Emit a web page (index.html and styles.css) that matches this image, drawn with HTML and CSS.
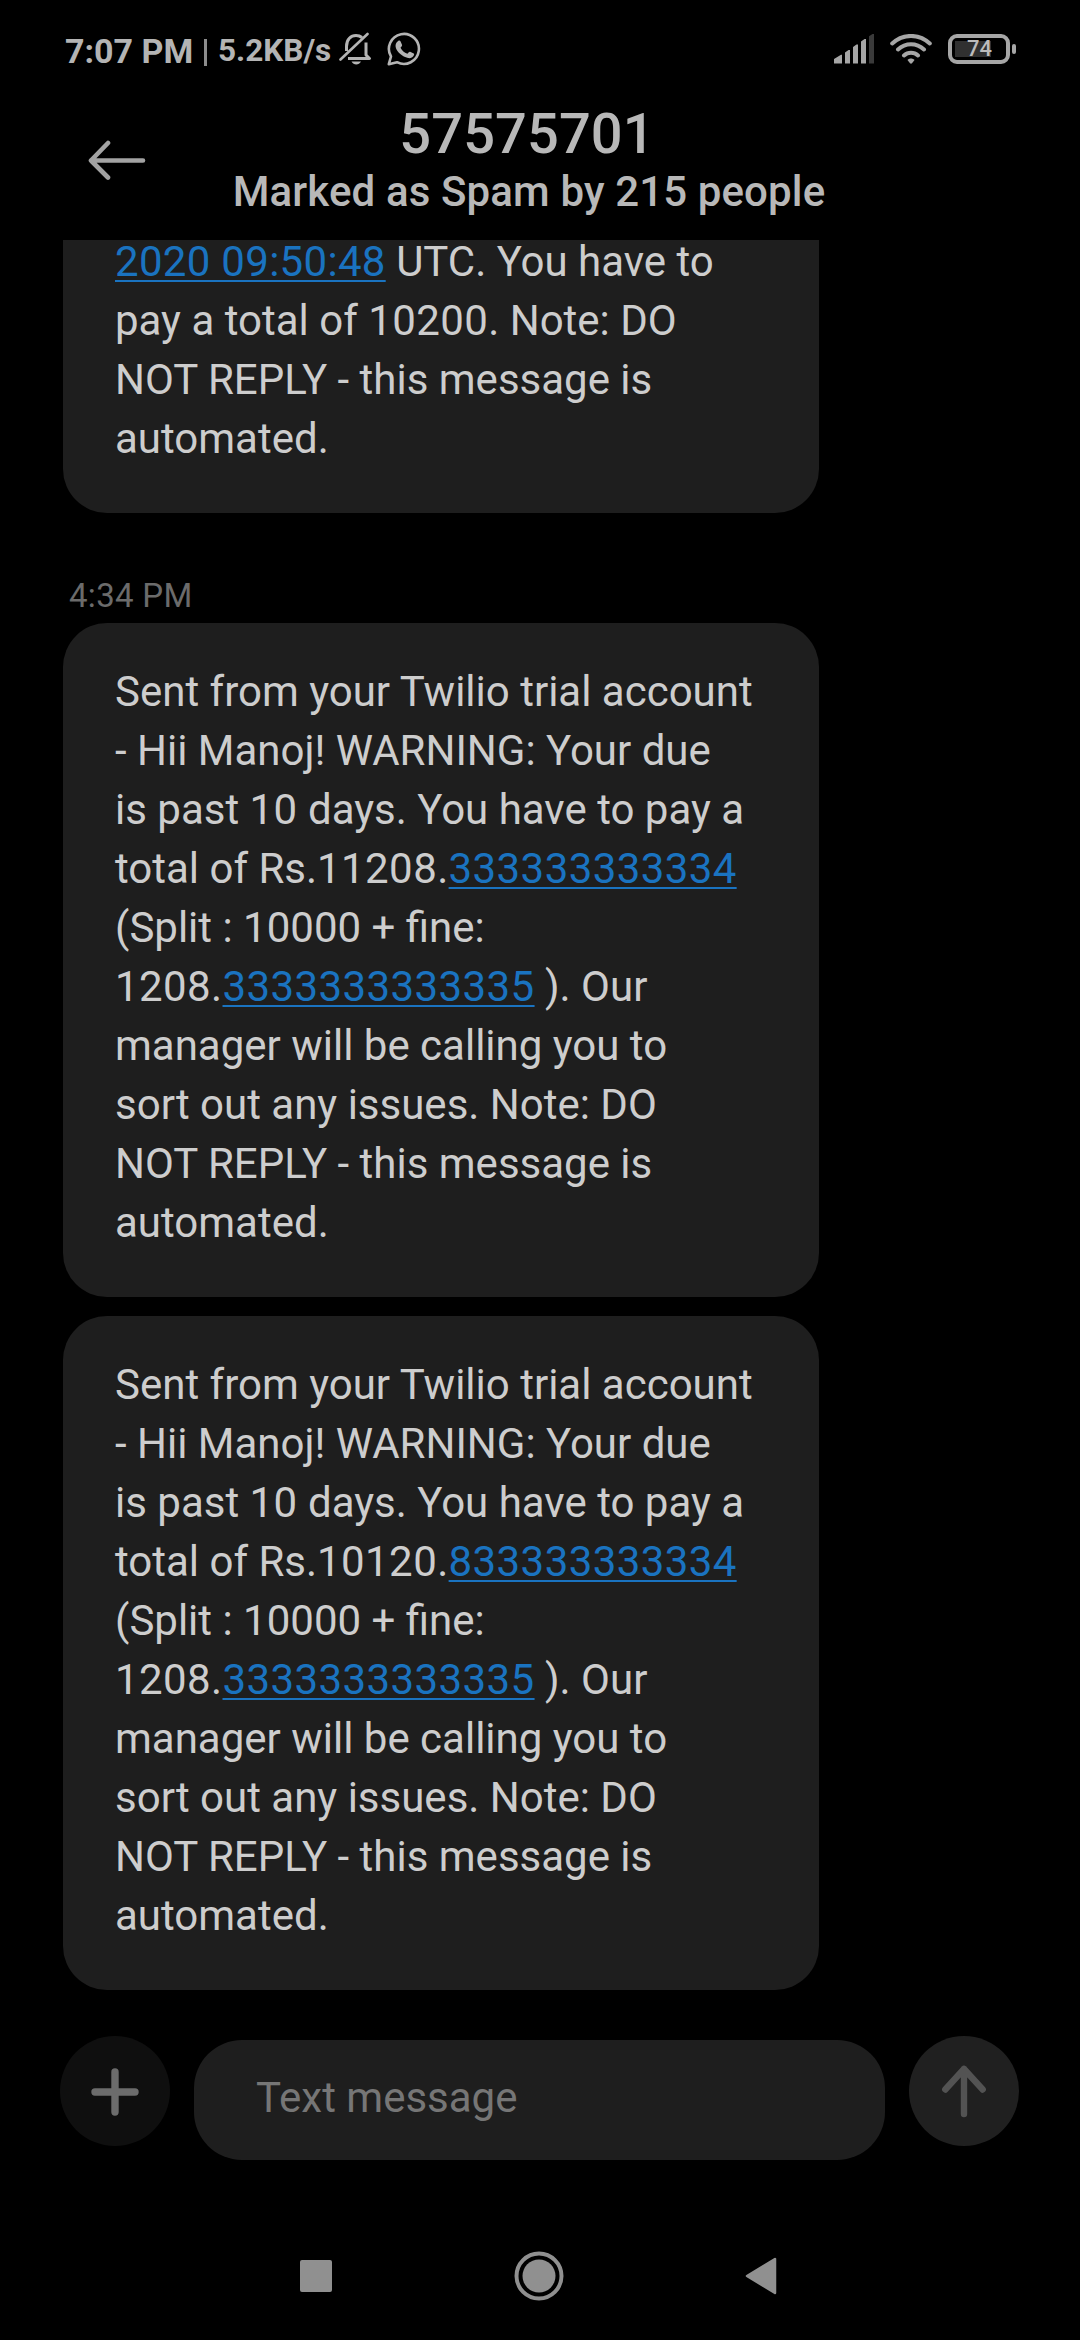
FILE: index.html
```html
<!DOCTYPE html>
<html lang="en">
<head>
<meta charset="utf-8">
<title>57575701</title>
<link rel="stylesheet" href="styles.css">
</head>
<body>
<div class="screen">
  <div class="status">
    <span class="clock">7:07 PM</span>
    <span class="divider"></span>
    <span class="speed">5.2KB/s</span>
    <svg class="bell" width="34" height="34" viewBox="0 0 34 34" fill="none" stroke="#b4b4b4" stroke-width="3">
      <path d="M7.500 19V14.500C7.500 7 12 3.500 17 3.500c2.500 0 4.500.8 6 2"/>
      <path d="M27 10.500V23l3.500 3.500H9" stroke-linejoin="round"/>
      <path d="M1.500 27.500 28.500 2" stroke-linecap="round" stroke-width="2.600"/>
      <path d="M12.500 29.500h9.500c-2 4-7.500 4-9.500 0z" fill="#b4b4b4" stroke="none"/>
    </svg>
    <svg class="whatsapp" width="34" height="34" viewBox="0 0 34 34" fill="none">
      <path d="M1.800 32.200 4 24.500A15 15 0 1 1 10 30.200z" stroke="#b4b4b4" stroke-width="2.600" stroke-linejoin="round"/>
      <path d="M11.400 8.700c.9-.4 1.700-.3 2.200.7l1.400 3.300c.3.800-.1 1.400-1.500 3 1.600 2.900 3.700 4.800 6.900 6.100 1.300-1.500 1.800-2.400 2.700-2.100l3.600 1.800c.6.400.6 1-.1 2.300-1 1.900-3.600 2.700-5.500 2.200-6.100-1.300-10.500-5.500-12.200-9.900-.9-2.600-.2-5.900 2.500-7.400z" fill="#b4b4b4"/>
    </svg>
    <span class="spacer"></span>
    <svg class="signal" width="40" height="30" viewBox="0 0 40 30" fill="#a6a6a6">
      <path d="M0 29.500v-4.500l7-4.200h1v8.700zM11 29.500V18.600l3.500-2.600H16v13.500zM19 29.500V13l3.500-2.500H24v19zM27 29.500V7.500L30.500 5H32v24.500z"/>
      <path d="M35 29.500V2.300L38.500 0H40v29.500z" fill="#3a3a3a"/>
    </svg>
    <svg class="wifi" width="42" height="30" viewBox="0 0 42 30" fill="none" stroke="#a6a6a6" stroke-width="4" stroke-linecap="round">
      <path d="M2.200 9.500C13-.6 29-.6 39.800 9.500M8 15.500c7.500-7 18.500-7 26 0M14 21.500c4-3.700 10-3.700 14 0"/>
      <path d="M17.500 26c1.800-2 5.200-2 7 0L22 29.300q-1 .8-2 0z" fill="#a6a6a6" stroke="none"/>
    </svg>
    <span class="battery"><span class="battery-text">74</span></span>
    <span class="battery-nub"></span>
  </div>

  <header class="header">
    <svg class="back" width="58" height="40" viewBox="0 0 58 40" fill="none" stroke="#a3a3a3" stroke-width="4.600" stroke-linecap="round" stroke-linejoin="round">
      <path d="M55 20.500H3M20 3 3 20.500 20 37.500"/>
    </svg>
    <div class="titles">
      <div class="title">57575701</div>
      <div class="subtitle">Marked as Spam by 215 people</div>
    </div>
  </header>

  <main class="chat">
    <div class="bubble clipped"><a class="date">2020 09:50:48</a> UTC. You have to<br>pay a total of <span class="num">10200</span>. Note: DO<br>NOT REPLY - this message is<br>automated.</div>
    <div class="time">4:34 PM</div>
    <div class="bubble">Sent from your Twilio trial account<br>- Hii Manoj! WARNING: Your due<br>is past <span class="num">10</span> days. You have to pay a<br>total of Rs.<span class="num">11208.</span><a>333333333334</a><br>(Split : 10000 + fine:<br><span class="num">1208.</span><a>3333333333335</a> ). Our<br>manager will be calling you to<br>sort out any issues. Note: DO<br>NOT REPLY - this message is<br>automated.</div>
    <div class="bubble">Sent from your Twilio trial account<br>- Hii Manoj! WARNING: Your due<br>is past <span class="num">10</span> days. You have to pay a<br>total of Rs.<span class="num">10120.</span><a>833333333334</a><br>(Split : 10000 + fine:<br><span class="num">1208.</span><a>3333333333335</a> ). Our<br>manager will be calling you to<br>sort out any issues. Note: DO<br>NOT REPLY - this message is<br>automated.</div>
  </main>

  <footer class="composer">
    <div class="round add">
      <svg width="50" height="50" viewBox="0 0 50 50" stroke="#6c6c6c" stroke-width="7.400" stroke-linecap="round"><path d="M25 6v40M5 26h40"/></svg>
    </div>
    <div class="field">Text message</div>
    <div class="round send">
      <svg width="50" height="56" viewBox="0 0 50 56" fill="none" stroke="#535353" stroke-width="6.400" stroke-linecap="round" stroke-linejoin="round"><path d="M25 51V6M6.300 26.500 25 6l18.700 20.500"/></svg>
    </div>
  </footer>

  <nav class="nav">
    <svg width="32" height="32" viewBox="0 0 32 32"><rect width="32" height="32" rx="2" fill="#909090"/></svg>
    <svg width="50" height="50" viewBox="0 0 50 50"><circle cx="25" cy="25" r="22.500" fill="none" stroke="#909090" stroke-width="4"/><circle cx="25" cy="25" r="16.500" fill="#909090"/></svg>
    <svg width="32" height="38" viewBox="0 0 32 38"><path d="M2 19 30 2v34z" fill="#909090" stroke="#909090" stroke-width="2.500" stroke-linejoin="round"/></svg>
  </nav>
</div>
</body>
</html>
```

FILE: styles.css
```css
* {
  box-sizing: border-box;
}

body {
  margin: 0;
  background: #000;
  font-family: Roboto, "Noto Sans", sans-serif;
}

svg {
  display: block;
  flex: none;
}

.screen {
  display: flex;
  flex-direction: column;
  width: 1080px;
  height: 2340px;
  overflow: hidden;
  background: #000;
}

.screen > * {
  flex-shrink: 0;
}

.status {
  display: flex;
  align-items: center;
  height: 100px;
  padding: 0 64px 2px 65px;
  color: #b4b4b4;
  font-weight: 700;
  white-space: nowrap;
}

.clock {
  width: 139px;
  margin-top: 3px;
  font-size: 34px;
  line-height: 40px;
}

.divider {
  width: 3px;
  height: 27px;
  margin: 6px 11px 0 0;
  background: #8c8c8c;
}

.speed {
  width: 121px;
  margin-top: 4px;
  font-size: 31.5px;
  line-height: 38px;
}

.whatsapp {
  margin-left: 14px;
}

.spacer {
  flex: 1;
}

.wifi {
  margin-left: 16px;
}

.battery {
  display: flex;
  align-items: center;
  justify-content: center;
  width: 62px;
  height: 30px;
  margin-left: 16px;
  padding-left: 1px;
  border: 4px solid #a6a6a6;
  border-radius: 9px;
  background: linear-gradient(#303030, #303030) 3px 3px / 36px 16px no-repeat;
}

.battery-text {
  color: #bcbcbc;
  font-size: 22px;
  font-weight: 500;
  line-height: 22px;
}

.battery-nub {
  width: 4px;
  height: 10px;
  margin-left: 2px;
  border-radius: 2px;
  background: #a6a6a6;
}

.header {
  display: flex;
  height: 140px;
  padding: 1px 0 0 88px;
}

.back {
  margin-top: 39px;
}

.titles {
  display: flex;
  flex-direction: column;
  width: 766px;
  color: #b8b8b8;
  font-weight: 500;
  text-align: center;
}

.title {
  padding-right: 4px;
  font-size: 56px;
  letter-spacing: 0.1px;
  line-height: 66px;
}

.subtitle {
  font-size: 42px;
  letter-spacing: 0.13px;
  line-height: 50px;
}

.chat {
  display: flex;
  flex-direction: column;
  height: 1750px;
  padding-left: 63px;
  overflow: hidden;
}

.bubble {
  flex: none;
  width: 756px;
  height: 674px;
  margin-bottom: 19px;
  padding: 39px 0 0 52px;
  border-radius: 44px;
  background: #1e1e1e;
  color: #cdcdcd;
  font-size: 42px;
  line-height: 59px;
  white-space: nowrap;
}

/* The oldest message is scrolled partly under the header. */
.bubble.clipped {
  height: 281px;
  margin-top: -8px;
  margin-bottom: 0;
  padding-top: 0;
  border-radius: 0 0 44px 44px;
}

.bubble a {
  color: #1a73c0;
  letter-spacing: 0.4px;
  text-decoration: underline;
  text-decoration-thickness: 2px;
  text-underline-offset: 4px;
}

.bubble a.date {
  letter-spacing: 0.3px;
}

.num {
  letter-spacing: 0.4px;
}

.time {
  flex: none;
  height: 110px;
  padding: 63px 0 0 6px;
  color: #6b6b6b;
  font-size: 33px;
  letter-spacing: 0.3px;
  line-height: 40px;
}

.composer {
  display: flex;
  height: 210px;
  padding: 46px 60px 0;
}

.round {
  display: flex;
  align-items: center;
  justify-content: center;
  width: 110px;
  height: 110px;
  border-radius: 50%;
}

.add {
  background: #0f0f0f;
}

.send {
  background: #202020;
}

.field {
  width: 691px;
  height: 120px;
  margin: 4px 24px 0;
  padding-left: 62px;
  border-radius: 48px;
  background: #1e1e1e;
  color: #767676;
  font-size: 42px;
  line-height: 115px;
}

.nav {
  display: flex;
  align-items: center;
  justify-content: space-between;
  height: 140px;
  padding: 11px 303px 0 300px;
}
```
